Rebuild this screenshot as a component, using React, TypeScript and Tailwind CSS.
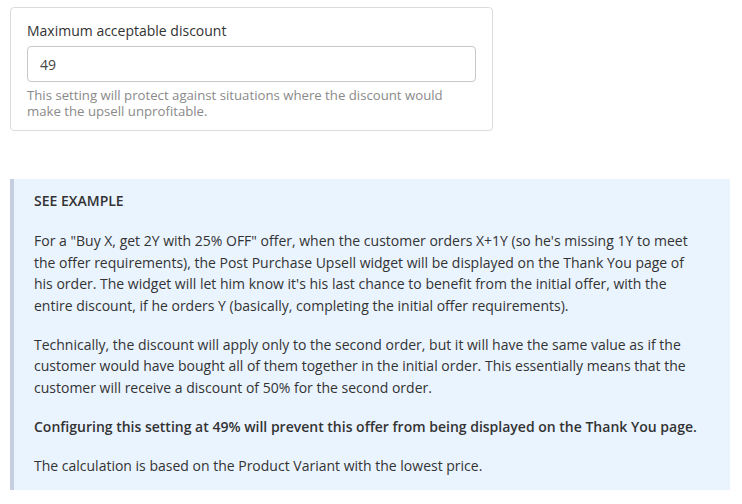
export default function App() {
  return (
    <div className="w-[742px] h-[504px] bg-white overflow-hidden font-['Open_Sans',sans-serif] text-[#333]">
      <div className="pt-[7px] pl-[10px]">
        <div className="w-[483px] border border-[#dcdcdc] rounded-[4px] pt-[13px] pb-[11px] px-[16px] bg-white">
          <div className="text-[14px] leading-[20px] text-[#333]">Maximum acceptable discount</div>
          <div className="mt-[5px] h-[36px] border border-[#c8c8c8] rounded-[4px] flex items-center px-[12px] text-[14px] text-[#444]">
            49
          </div>
          <div className="mt-[5px] text-[13.2px] leading-[16px] text-[#8a8a8a] pr-[10px]">
            This setting will protect against situations where the discount would make the upsell unprofitable.
          </div>
        </div>
      </div>
      <div className="mt-[48px] ml-[10px] w-[720px] bg-[#eaf4ff] border-l-[4px] border-[#c6cfe0] pl-[20px] pr-[24px] pt-[12px] pb-[14px] text-[14px] leading-[21.5px] text-[#333]">
        <div className="font-semibold text-[14px] leading-[20px] text-[#333]">SEE EXAMPLE</div>
        <p className="mt-[19px]">
          For a "Buy X, get 2Y with 25% OFF" offer, when the customer orders X+1Y (so he's missing 1Y to meet the offer requirements), the Post Purchase Upsell widget will be displayed on the Thank You page of his order. The widget will let him know it's his last chance to benefit from the initial offer, with the entire discount, if he orders Y (basically, completing the initial offer requirements).
        </p>
        <p className="mt-[17.5px]">
          Technically, the discount will apply only to the second order, but it will have the same value as if the customer would have bought all of them together in the initial order. This essentially means that the customer will receive a discount of 50% for the second order.
        </p>
        <p className="mt-[17.5px] font-semibold">
          Configuring this setting at 49% will prevent this offer from being displayed on the Thank You page.
        </p>
        <p className="mt-[17.5px]">
          The calculation is based on the Product Variant with the lowest price.
        </p>
      </div>
    </div>
  );
}
